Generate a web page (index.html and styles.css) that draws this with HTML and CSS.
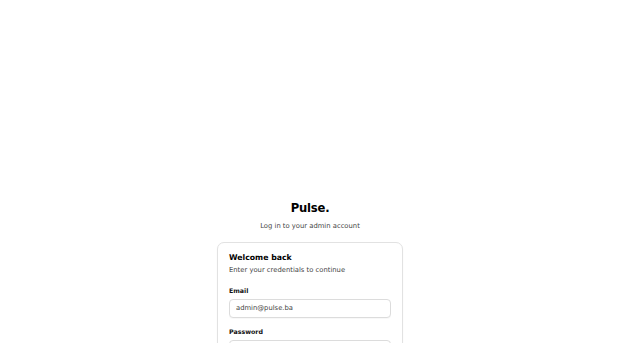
FILE: index.html
```html
<!DOCTYPE html>
<html lang="en">
<head>
  <meta charset="UTF-8">
  <title>Pulse - Admin Login</title>
  <link rel="stylesheet" href="styles.css">
</head>
<body>
  <div class="page">
    <div class="brand">
      <h1>Pulse.</h1>
      <p>Log in to your admin account</p>
    </div>

    <form class="card" onsubmit="return false">
      <h2>Welcome back</h2>
      <p class="hint">Enter your credentials to continue</p>

      <div class="field">
        <label for="email">Email</label>
        <input id="email" type="email" value="admin@pulse.ba">
      </div>

      <div class="field">
        <label for="password">Password</label>
        <input id="password" type="password">
      </div>
    </form>
  </div>
</body>
</html>
```

FILE: styles.css
```css
body {
  margin: 0;
  font-family: "DejaVu Sans", Verdana, sans-serif;
  background: #fff;
  color: #111;
}
.page {
  display: flex;
  flex-direction: column;
  align-items: center;
  padding-top: 201px;
}
.brand {
  text-align: center;
  margin-bottom: 11px;
}
.brand h1 {
  margin: 0;
  font-size: 11.6px;
  line-height: 15.5px;
  letter-spacing: -0.2px;
  color: #000;
}
.brand p {
  margin: 5px 0 0;
  font-size: 6.8px;
  line-height: 9.7px;
  color: #444;
}
.card {
  width: 186px;
  box-sizing: border-box;
  padding: 10px 11px 12px;
  border: 1px solid #e2e2e2;
  border-radius: 7px;
  box-shadow: 0 1px 2px rgba(0, 0, 0, 0.04);
  background: #fff;
}
.card h2 {
  margin: 0;
  font-size: 7.75px;
  line-height: 9.7px;
  color: #000;
}
.card .hint {
  margin: 3px 0 0;
  font-size: 6.8px;
  line-height: 9.7px;
  color: #444;
}
.field {
  display: flex;
  flex-direction: column;
  gap: 4px;
  margin-top: 10px;
}
.field + .field {
  margin-top: 9px;
}
.field label {
  font-size: 6.3px;
  line-height: 9px;
  font-weight: bold;
  color: #111;
}
.field input {
  height: 19px;
  box-sizing: border-box;
  padding: 0 6px;
  border: 1px solid #dcdcdc;
  border-radius: 4px;
  font-family: inherit;
  font-size: 6.8px;
  color: #444;
  box-shadow: 0 1px 1px rgba(0, 0, 0, 0.03);
}
```
